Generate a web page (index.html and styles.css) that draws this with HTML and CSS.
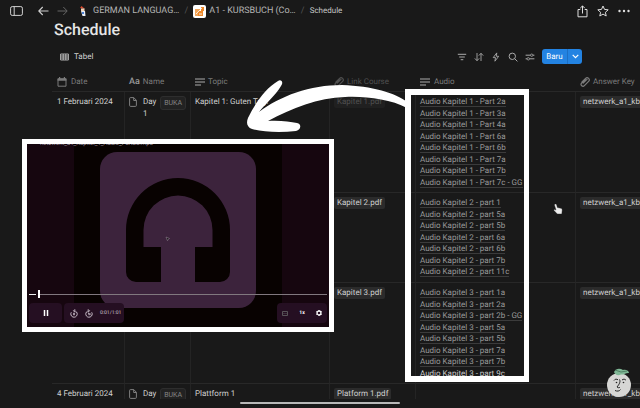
FILE: index.html
```html
<!DOCTYPE html>
<html lang="id">
<head>
<meta charset="utf-8">
<meta name="viewport" content="width=device-width, initial-scale=1">
<title>Schedule</title>
<link rel="stylesheet" href="styles.css">
</head>
<body>
<svg class="defs" width="0" height="0" aria-hidden="true">
  <symbol id="lines" viewBox="0 0 10 10"><path d="M0 2h10M0 5h10M0 8h6" stroke="currentColor" stroke-width="1.3"/></symbol>
  <symbol id="clip" viewBox="0 0 10 10"><path d="M3.2 6.2 7 2.4M2 5 5.6 1.4a2 2 0 0 1 3 3L4.4 8.6a1.8 1.8 0 0 1-2.8-2.6L5.4 2.6" fill="none" stroke="currentColor" stroke-width="1.2" stroke-linecap="round"/></symbol>
  <symbol id="page" viewBox="0 0 8 10"><path d="M1.5.6h3.3L7.4 3.3v5.1a1 1 0 0 1-1 1H1.6a1 1 0 0 1-1-1V1.5a.9.9 0 0 1 .9-.9zM4.7.8v2.7h2.6" fill="none" stroke="currentColor" stroke-width=".9"/></symbol>
</svg>

<header class="topbar">
  <button class="icon" aria-label="Sidebar"><svg width="13" height="10" viewBox="0 0 13 10"><rect x=".6" y=".6" width="11.8" height="8.8" rx="1.6" fill="none" stroke="currentColor"/><path d="M4.2.6v8.8" stroke="currentColor"/></svg></button>
  <nav class="history">
    <button class="icon" aria-label="Kembali"><svg width="11" height="10" viewBox="0 0 11 10"><path d="M10.5 5H1M4.7 1 .8 5l3.9 4" fill="none" stroke="currentColor" stroke-width="1.1"/></svg></button>
    <button class="icon off" aria-label="Maju"><svg width="11" height="10" viewBox="0 0 11 10"><path d="M.5 5H10M6.3 1l3.9 4-3.9 4" fill="none" stroke="currentColor"/></svg></button>
  </nav>
  <nav class="crumbs">
    <a class="crumb first" href="#"><svg width="7" height="12" viewBox="0 0 7 12"><path d="M1 3 2.5 1 6 4z" fill="#d9482c"/><path d="M2 3.5h3.5V6H2z" fill="#f0d4b8"/><path d="M2 6h4l.5 5h-3z" fill="#e8edf5"/><path d="M3 7h2v2H3z" fill="#4a7fd0"/></svg><span>GERMAN LANGUAG…</span></a>
    <span class="slash">/</span>
    <a class="crumb second" href="#"><svg width="13" height="13" viewBox="0 0 13 13"><rect width="13" height="13" rx="2" fill="#fff"/><path d="M2 4h5v2H5v5H2z" fill="#f2a65a"/><path d="M5 6h5v5H5zM8 2h3v4H8z" fill="#ee8a2c"/><path d="m3 9 6-6M6 9h3" stroke="#fff" stroke-width=".8"/></svg><span>A1 - KURSBUCH (Co…</span></a>
    <span class="slash">/</span>
    <a class="crumb small" href="#">Schedule</a>
  </nav>
  <div class="actions">
    <button class="icon" aria-label="Bagikan"><svg width="11" height="13" viewBox="0 0 11 13"><path d="M3.3 4.5H1v7.3h9V4.5H7.7M5.5 8.5V1M3.2 3.2 5.5.9l2.3 2.3" fill="none" stroke="currentColor"/></svg></button>
    <button class="icon" aria-label="Favorit"><svg width="12" height="12" viewBox="0 0 12 12"><path d="m6 1 1.5 3.4 3.7.4-2.8 2.5.8 3.7L6 9.1 2.8 11l.8-3.7L.8 4.8l3.7-.4z" fill="none" stroke="currentColor"/></svg></button>
    <button class="icon" aria-label="Lainnya"><svg width="12" height="12" viewBox="0 0 12 12" fill="currentColor"><circle cx="1.5" cy="6" r="1.2"/><circle cx="6" cy="6" r="1.2"/><circle cx="10.5" cy="6" r="1.2"/></svg></button>
  </div>
</header>

<main class="content">
  <h1>Schedule</h1>
  <div class="viewbar">
    <button class="view"><svg width="9" height="8" viewBox="0 0 9 8"><path d="M.6 1h7.8v6H.6zM.6 3h7.8M.6 5h7.8M3.2 1v6M5.800 1v6" fill="none" stroke="currentColor" stroke-width=".8"/></svg>Tabel</button>
    <div class="tools">
      <button class="icon" aria-label="Filter"><svg width="10" height="10" viewBox="0 0 10 10"><path d="M.8 2.3h8.4M2.2 5h5.6M3.7 7.7h2.6" stroke="currentColor"/></svg></button>
      <button class="icon" aria-label="Urutkan"><svg width="10" height="10" viewBox="0 0 10 10"><path d="M3 1v7.6M.8 6.4 3 8.7l2.2-2.3M7 9V1.4M4.8 3.6 7 1.3l2.2 2.3" fill="none" stroke="currentColor" stroke-width=".9"/></svg></button>
      <button class="icon" aria-label="Otomatisasi"><svg width="10" height="10" viewBox="0 0 10 10"><path d="M5.8.9 2.2 5.6h2.3l-.6 3.6 3.8-4.9H5.3z" fill="none" stroke="currentColor" stroke-width=".9"/></svg></button>
      <button class="icon" aria-label="Cari"><svg width="10" height="10" viewBox="0 0 10 10"><circle cx="4.3" cy="4.3" r="3.2" fill="none" stroke="currentColor"/><path d="m6.6 6.6 2.8 2.8" stroke="currentColor"/></svg></button>
      <button class="icon" aria-label="Pengaturan"><svg width="10" height="10" viewBox="0 0 10 10"><path d="M.6 3.2h4.8M8 3.2h1.4M.6 6.8H2M4.6 6.8h4.8" stroke="currentColor"/><circle cx="6.7" cy="3.2" r="1.2" fill="none" stroke="currentColor" stroke-width=".8"/><circle cx="3.3" cy="6.8" r="1.2" fill="none" stroke="currentColor" stroke-width=".8"/></svg></button>
      <div class="new">
        <button class="new-main">Baru</button>
        <button class="new-more" aria-label="Opsi baru"><svg width="7" height="5" viewBox="0 0 7 5"><path d="M.7.9 3.5 3.7 6.3.9" fill="none" stroke="currentColor" stroke-width="1.2"/></svg></button>
      </div>
    </div>
  </div>

  <div class="sheet">
  <table>
    <colgroup><col class="c-date"><col class="c-name"><col class="c-topic"><col class="c-link"><col class="c-audio"><col></colgroup>
    <thead>
      <tr>
        <th><span class="head"><svg width="10" height="10" viewBox="0 0 10 10"><path d="M1 1.8h8v7.4H1z" fill="none" stroke="currentColor"/><path d="M.6 1.4h8.8v2.4H.6zM2 0h1.2v2H2zM6.8 0H8v2H6.8z" fill="currentColor"/></svg>Date</span></th>
        <th><span class="head tight"><b>Aa</b>Name</span></th>
        <th><span class="head tight"><svg width="10" height="10"><use href="#lines"/></svg>Topic</span></th>
        <th class="faded"><span class="head tight"><svg width="10" height="10"><use href="#clip"/></svg>Link Course</span></th>
        <th><span class="head"><svg width="10" height="10"><use href="#lines"/></svg>Audio</span></th>
        <th><span class="head tight"><svg width="10" height="10"><use href="#clip"/></svg>Answer Key</span></th>
      </tr>
    </thead>
    <tbody>
      <tr>
        <td>1 Februari 2024</td>
        <td><div class="name"><svg width="8" height="10"><use href="#page"/></svg><span>Day 1</span><button class="open">BUKA</button></div></td>
        <td>Kapitel 1: Guten Tag!</td>
        <td class="faded"><a class="chip" href="#">Kapitel 1.pdf</a></td>
        <td><ul class="files eight">
          <li><a href="#">Audio Kapitel 1 - Part 2a</a></li>
          <li><a href="#">Audio Kapitel 1 - Part 3a</a></li>
          <li><a href="#">Audio Kapitel 1 - Part 4a</a></li>
          <li><a href="#">Audio Kapitel 1 - Part 6a</a></li>
          <li><a href="#">Audio Kapitel 1 - Part 6b</a></li>
          <li><a href="#">Audio Kapitel 1 - Part 7a</a></li>
          <li><a href="#">Audio Kapitel 1 - Part 7b</a></li>
          <li><a href="#">Audio Kapitel 1 - Part 7c - GG</a></li>
        </ul></td>
        <td><a class="chip" href="#">netzwerk_a1_kb…</a></td>
      </tr>
      <tr>
        <td></td><td></td><td></td>
        <td><a class="chip" href="#">Kapitel 2.pdf</a></td>
        <td><ul class="files seven">
          <li><a href="#">Audio Kapitel 2 - part 1</a></li>
          <li><a href="#">Audio Kapitel 2 - part 5a</a></li>
          <li><a href="#">Audio Kapitel 2 - part 5b</a></li>
          <li><a href="#">Audio Kapitel 2 - part 6a</a></li>
          <li><a href="#">Audio Kapitel 2 - part 6b</a></li>
          <li><a href="#">Audio Kapitel 2 - part 7b</a></li>
          <li><a href="#">Audio Kapitel 2 - part 11c</a></li>
        </ul></td>
        <td><a class="chip" href="#">netzwerk_a1_kb…</a></td>
      </tr>
      <tr>
        <td></td><td></td><td></td>
        <td><a class="chip" href="#">Kapitel 3.pdf</a></td>
        <td><ul class="files eight">
          <li><a href="#">Audio Kapitel 3 - part 1a</a></li>
          <li><a href="#">Audio Kapitel 3 - part 2a</a></li>
          <li><a href="#">Audio Kapitel 3 - part 2b - GG</a></li>
          <li><a href="#">Audio Kapitel 3 - part 5a</a></li>
          <li><a href="#">Audio Kapitel 3 - part 5b</a></li>
          <li><a href="#">Audio Kapitel 3 - part 7a</a></li>
          <li><a href="#">Audio Kapitel 3 - part 7b</a></li>
          <li><a class="bright" href="#">Audio Kapitel 3 - part 9c</a></li>
        </ul></td>
        <td><a class="chip" href="#">netzwerk_a1_kb…</a></td>
      </tr>
      <tr>
        <td>4 Februari 2024</td>
        <td><div class="name"><svg width="8" height="10"><use href="#page"/></svg><span>Day</span><button class="open">BUKA</button></div></td>
        <td>Plattform 1</td>
        <td><a class="chip" href="#">Platform 1.pdf</a></td>
        <td></td>
        <td><a class="chip" href="#">netzwerk_a1_kb…</a></td>
      </tr>
    </tbody>
  </table>
  </div>
</main>

<footer class="homebar"><span></span></footer>

<div class="highlight"></div>

<svg class="arrow" width="164" height="60" viewBox="244 76 164 60" aria-hidden="true"><path d="M278 81C281 79 284 82 281 86C275 96 265 104 259 112C280 96 310 85 342 85C372 86 396 93 407 102V108C390 99 365 96 345 97C318 98 292 108 268 121C280 120 290 122 297 123C302 124 301 130 296 131C280 133 262 132 252 129C247 127 246 123 248 118C255 103 266 88 278 81Z" fill="#fff"/></svg>

<section class="player">
  <p class="track">netzwerk_a1_Kapitel_1_Audio_Part2a.mp3</p>
  <svg class="cover" width="156" height="156" viewBox="0 0 156 156" aria-hidden="true"><rect width="156" height="156" rx="17" fill="#3c233c"/><path d="M26 78a52 52 0 0 1 104 0v42a10 10 0 0 1-10 10H95V95h17.500V78a34.500 34.500 0 0 0-69 0v17H61v35H36a10 10 0 0 1-10-10z" fill="#080201"/><path d="m66 85 3.500 1.500-1.300.8-.7 1.400z" fill="#111" stroke="#a090a0" stroke-width=".5"/></svg>
  <div class="controls">
    <input class="seek" type="range" min="0" max="100" value="3" aria-label="Posisi">
    <div class="buttons">
      <div class="group pause"><button class="icon" aria-label="Jeda"><svg width="6" height="6" viewBox="0 0 6 6"><path d="M1.500 0v6M4.500 0v6" stroke="#fff" stroke-width="1.500"/></svg></button></div>
      <div class="group skip">
        <button class="icon" aria-label="Mundur"><svg width="8" height="9" viewBox="0 0 8 9"><path d="M1.300 3.300a3.200 3.200 0 1 0 2.700-1.500M5 .3 3.500 1.800 5 3.300M4 3.700v2.600M3 5h2" fill="none" stroke="currentColor" stroke-width=".9"/></svg></button>
        <button class="icon" aria-label="Maju"><svg width="8" height="9" viewBox="0 0 8 9"><path d="M6.700 3.300A3.200 3.200 0 1 1 4 1.800M3 .3l1.500 1.500L3 3.300M3 4.200h1v2M5 4.200v2" fill="none" stroke="currentColor" stroke-width=".9"/></svg></button>
        <span>0:01/1:01</span>
      </div>
      <div class="group options">
        <button class="icon off" aria-label="Teks"><svg width="6" height="5" viewBox="0 0 6 5"><path d="M.5.500h5v4h-5zM1.500 2.500h1M3.500 2.500h1" fill="none" stroke="currentColor" stroke-width=".8"/></svg></button>
        <button class="icon speed" aria-label="Kecepatan">1x</button>
        <button class="icon" aria-label="Setelan"><svg width="6" height="6" viewBox="0 0 6 6"><circle cx="3" cy="3" r="2" fill="none" stroke="#fff" stroke-width="1.300"/><path d="M3 0v1M3 5v1M.4 1.500l.9.500M4.700 4l.9.500M.4 4.500l.9-.500M4.700 2l.9-.500" stroke="#fff"/></svg></button>
      </div>
    </div>
  </div>
</section>

<svg class="cursor" width="10" height="12" viewBox="0 0 10 12" aria-hidden="true"><path d="M2.200 1c.8-.3 1.300.2 1.500 1l.7 2.500 3.500.8c1 .3 1.400 1 1.300 2L8.800 11H4.300L1 7.600c-.5-.8.300-1.500 1-1.100l1 .6L1.500 2.200c-.2-.6.100-1.100.7-1.200z" fill="#ececec" stroke="#222" stroke-width=".4"/></svg>

<button class="assistant" aria-label="Asisten"><svg width="26" height="36" viewBox="0 0 26 36"><circle cx="13" cy="21" r="12" fill="#d6d6d4"/><path d="M8 8c2-4 6-4 9-2 3-1 6 1 6 3-3-.5-5 2-8 1.500C12 12 9 11 8 8z" fill="#7fb795"/><path d="M9 6l6 2 6-1" fill="none" stroke="#3d6a50" stroke-width=".7"/><path d="M8 16.500c1-1.500 2.500-1.700 4-.7M16 16c1.500-1.200 3-1 4 .3M13.500 15.500c1.300 2.500-.5 5-2.500 7.500 1 1 2 .8 3 .3M9 26.500c2 1 4.500.8 5.500-1" fill="none" stroke="#222" stroke-width="1"/><circle cx="10.500" cy="18.500" r=".8" fill="#222"/><circle cx="17.500" cy="18.500" r=".8" fill="#222"/></svg></button>
</body>
</html>
```
FILE: styles.css
```css
* { box-sizing: border-box; }

body {
  margin: 0;
  height: 100vh;
  overflow: hidden;
  display: flex;
  flex-direction: column;
  position: relative;
  background: #191919;
  color: #d0d0d0;
  font-family: Roboto, "Liberation Sans", sans-serif;
  font-size: 8px;
  line-height: 12px;
  text-rendering: geometricPrecision;
}

.defs { position: absolute; }
svg { display: block; flex: none; }
a { color: inherit; text-decoration: none; }

button {
  margin: 0;
  padding: 0;
  border: 0;
  background: none;
  color: inherit;
  font: inherit;
  text-rendering: inherit;
}

.icon { display: flex; align-items: center; justify-content: center; }
.off { color: #666; }

/* Top bar */
.topbar {
  display: flex;
  align-items: center;
  height: 22px;
  flex: none;
  padding: 0 10px;
}
.history { display: flex; gap: 8px; margin-left: 15px; }
.crumbs { display: flex; align-items: center; margin-left: 11px; font-size: 9px; color: #b5b5b5; }
.crumb { display: flex; align-items: center; }
.first { gap: 7px; }
.second { gap: 3px; }
.small { font-size: 8px; color: #c4c4c4; }
.slash { color: #555; width: 14px; text-align: center; }
.actions { display: flex; align-items: center; gap: 9px; margin-left: auto; color: #dedede; }

/* Page content */
.content {
  flex: 1;
  min-height: 0;
  display: flex;
  flex-direction: column;
  padding-left: 52px;
}
h1 {
  margin: 0;
  padding-left: 2px;
  font-size: 16px;
  line-height: 16px;
  font-weight: 500;
  color: #e6e6e6;
}
.viewbar {
  display: flex;
  align-items: center;
  justify-content: space-between;
  height: 15px;
  margin: 11px 58px 9px 8px;
}
.view { display: flex; align-items: center; gap: 5px; }
.tools { display: flex; align-items: center; gap: 7px; color: #aaa; }
.new {
  display: flex;
  height: 15px;
  border-radius: 3px;
  background: #2383e2;
  color: #fff;
  overflow: hidden;
}
.new-main { width: 25px; }
.new-more {
  width: 15px;
  display: flex;
  align-items: center;
  justify-content: center;
  border-left: 1px solid #1c6fc4;
}

/* Table */
.sheet { flex: 1; min-height: 0; overflow: hidden; }
table { width: 100%; table-layout: fixed; border-collapse: separate; border-spacing: 0; }
.c-date { width: 73px; }
.c-name { width: 66px; }
.c-topic { width: 139px; }
.c-link { width: 86px; }
.c-audio { width: 160px; }
th, td {
  padding: 4px;
  border-bottom: 1px solid #282828;
  text-align: left;
  vertical-align: top;
  font-weight: 400;
  white-space: nowrap;
}
th { padding: 3px 4px; color: #7b7b7b; }
td { border-right: 1px solid #242424; }
th:first-child, td:first-child { padding-left: 5px; }
td:last-child, th:last-child { padding-right: 0; border-right: 0; }
.head { display: flex; align-items: center; gap: 4px; }
.tight { gap: 3px; }
.head b { font-size: 9px; font-weight: 500; color: #999; }
.faded { color: #505050; }

.name { display: flex; align-items: flex-start; white-space: normal; }
.name svg { color: #8a8a8a; margin-top: 1px; }
.name span { width: 18px; margin-left: 6px; }
.open {
  margin-left: auto;
  height: 14px;
  padding: 0 3px;
  border: 1px solid #2e2e2e;
  border-radius: 3px;
  background: #222;
  color: #858585;
  font-size: 7px;
}

.chip {
  display: inline-block;
  padding: 0 3px;
  border-radius: 2px;
  background: #2b2b2b;
}
.faded .chip { background: #202020; }
td:last-child .chip { padding-right: 0; }

.files {
  display: grid;
  grid-auto-rows: 1fr;
  margin: 0;
  padding: 0;
  list-style: none;
  color: #999;
}
.eight { height: 92px; }
.seven { height: 81px; }
.files li { min-height: 0; }
.files a { border-bottom: 1px solid #3b3b3b; }
.files .bright { color: #ccc; border-bottom: 0; }

.homebar { display: flex; justify-content: center; height: 9px; flex: none; padding-top: 3px; }
.homebar span { width: 25%; height: 2px; border-radius: 1px; background: #b8b8b8; }

/* Annotations lying over the page */
.highlight {
  position: absolute;
  left: 405px;
  top: 89px;
  width: 124px;
  height: 293px;
  border: 6px solid #fff;
  border-right-width: 5px;
}
.arrow { position: absolute; left: 244px; top: 76px; }
.cursor { position: absolute; left: 553px; top: 203px; }
.assistant { position: absolute; right: 8px; bottom: 8px; }

/* Floating audio player */
.player {
  position: absolute;
  left: 22px;
  top: 139px;
  width: 312px;
  height: 193px;
  display: flex;
  flex-direction: column;
  align-items: center;
  border: 5px solid #fff;
  background: linear-gradient(90deg, #16060f 47px, #080201 47px, #080201 255px, #16060f 255px);
  color: #d8cdd8;
}
.track {
  align-self: stretch;
  display: flex;
  align-items: flex-end;
  height: 3px;
  margin: 0 0 5px;
  padding-left: 13px;
  overflow: hidden;
  color: #a89fa8;
  font-size: 6px;
  line-height: 6px;
}
.controls { align-self: stretch; margin-top: -18px; padding: 0 2px; }
.seek {
  display: block;
  width: 100%;
  height: 8px;
  margin: 0 0 5px;
  appearance: none;
  background: linear-gradient(90deg, #eee 7px, transparent 7px, transparent 11px, #81787f 11px) center / 100% 1px no-repeat;
}
.seek::-webkit-slider-thumb {
  appearance: none;
  width: 2px;
  height: 8px;
  background: #fff;
}
.buttons { display: flex; gap: 2px; }
.group { display: flex; align-items: center; height: 20px; border-radius: 4px; background: #250f22; }
.pause { width: 33px; justify-content: center; }
.skip { width: 60px; gap: 7px; padding-left: 6px; font-size: 5px; }
.options { width: 50px; margin-left: auto; justify-content: space-around; }
.speed { font-size: 5px; font-weight: 700; color: #fff; }
```
